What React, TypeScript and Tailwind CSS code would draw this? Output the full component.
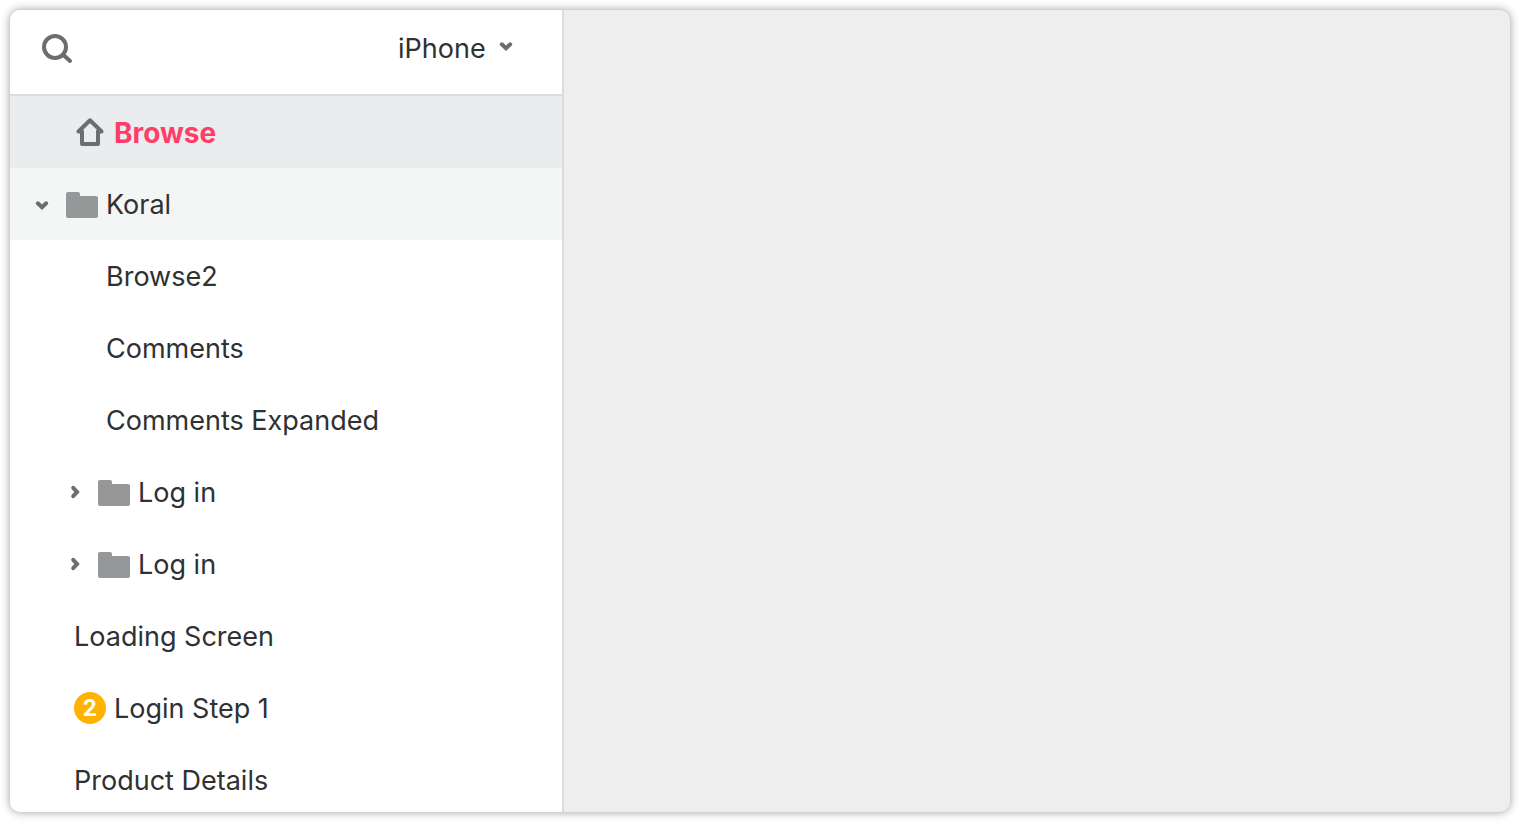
import { useState } from "react";
import clsx from "clsx";

type Row = {
  label: string;
  indent: string;
  kind?: "home" | "folder";
  open?: boolean;
  badge?: number;
  active?: boolean;
};

const rows: Row[] = [
  { label: "Browse", indent: "pl-16", kind: "home", active: true },
  { label: "Koral", indent: "pl-4", kind: "folder", open: true },
  { label: "Browse2", indent: "pl-24" },
  { label: "Comments", indent: "pl-24" },
  { label: "Comments Expanded", indent: "pl-24" },
  { label: "Log in", indent: "pl-12", kind: "folder" },
  { label: "Log in", indent: "pl-12", kind: "folder" },
  { label: "Loading Screen", indent: "pl-16" },
  { label: "Login Step 1", indent: "pl-16", badge: 2 },
  { label: "Product Details", indent: "pl-16" },
];

function SearchIcon() {
  return (
    <svg className="size-8" viewBox="0 0 32 32" fill="none" stroke="#6b6d6e" strokeWidth="4" strokeLinecap="round">
      <circle cx="13" cy="15" r="11" />
      <path d="M21.5 23 28 29" />
    </svg>
  );
}

function HomeIcon() {
  return (
    <svg className="size-8" viewBox="0 0 32 32" fill="none" stroke="#6b6d6e" strokeWidth="4" strokeLinecap="round" strokeLinejoin="round">
      <path d="M8 16v12h16V16" />
      <path d="M4.5 15.5 16 4.3l11.5 11.2H24M4.5 15.5H8" />
    </svg>
  );
}

function FolderIcon() {
  return (
    <svg className="size-8" viewBox="0 0 32 32" fill="#969799">
      <path d="M2 4h10a2 2 0 0 1 2 2v2h16a2 2 0 0 1 2 2v18a2 2 0 0 1-2 2H2a2 2 0 0 1-2-2V6a2 2 0 0 1 2-2z" />
    </svg>
  );
}

function Chevron({ open = true }: { open?: boolean }) {
  return (
    <svg className="size-4" viewBox="0 0 16 16" fill="none" stroke="#6b6d6e" strokeWidth="4" strokeLinecap="round">
      <path d={open ? "M3.8 7.3 8 11.2 12.2 7.3" : "M7.2 3.8 11 8 7.2 12.2"} />
    </svg>
  );
}

function TreeRow({ row }: { row: Row }) {
  return (
    <li
      className={clsx(
        "flex h-[72px] items-center gap-2",
        row.indent,
        row.active && "bg-[#ebeced]",
        row.open && "bg-[#f4f6f6]"
      )}
    >
      {row.kind === "folder" && (
        <button
          type="button"
          aria-label={row.open ? "Collapse" : "Expand"}
          className="flex size-8 items-center justify-center"
        >
          <Chevron open={!!row.open} />
        </button>
      )}
      {row.kind === "folder" && <FolderIcon />}
      {row.kind === "home" && <HomeIcon />}
      {row.badge && (
        <span className="flex size-8 items-center justify-center rounded-full bg-[#ffb300] font-['Roboto',sans-serif] text-2xl font-bold text-white">
          {row.badge}
        </span>
      )}
      <a href="#" className={clsx("pt-0.5", row.active && "text-[28px] font-bold text-[#ff3d68]")}>
        {row.label}
      </a>
    </li>
  );
}

export default function App() {
  const [device, setDevice] = useState("iPhone");

  return (
    <div className="h-screen bg-white p-2.5 font-['Inter',sans-serif] text-[27px] leading-9 text-[#2f3132]">
      <div className="flex h-full overflow-hidden rounded-[10px] bg-[#eeeeee] shadow-[0_0_10px_rgba(0,0,0,0.4)]">
        {/* Sidebar */}
        <aside className="w-[554px] shrink-0 overflow-hidden border-r-2 border-[#dcdcdc] bg-white">
          <header className="flex h-[86px] items-center justify-between border-b-2 border-[#dcdcdc] pb-2 pl-8 pr-12">
            <button type="button" aria-label="Search">
              <SearchIcon />
            </button>
            <div className="relative flex items-center">
              <select
                aria-label="Device"
                value={device}
                onChange={(e) => setDevice(e.target.value)}
                className="appearance-none bg-transparent pr-7 pt-0.5"
              >
                <option>iPhone</option>
              </select>
              <span className="pointer-events-none absolute right-0 top-2">
                <Chevron />
              </span>
            </div>
          </header>
          <nav>
            <ul>
              {rows.map((row, i) => (
                <TreeRow key={i} row={row} />
              ))}
            </ul>
          </nav>
        </aside>
        {/* Canvas */}
        <main className="flex-1" />
      </div>
    </div>
  );
}
